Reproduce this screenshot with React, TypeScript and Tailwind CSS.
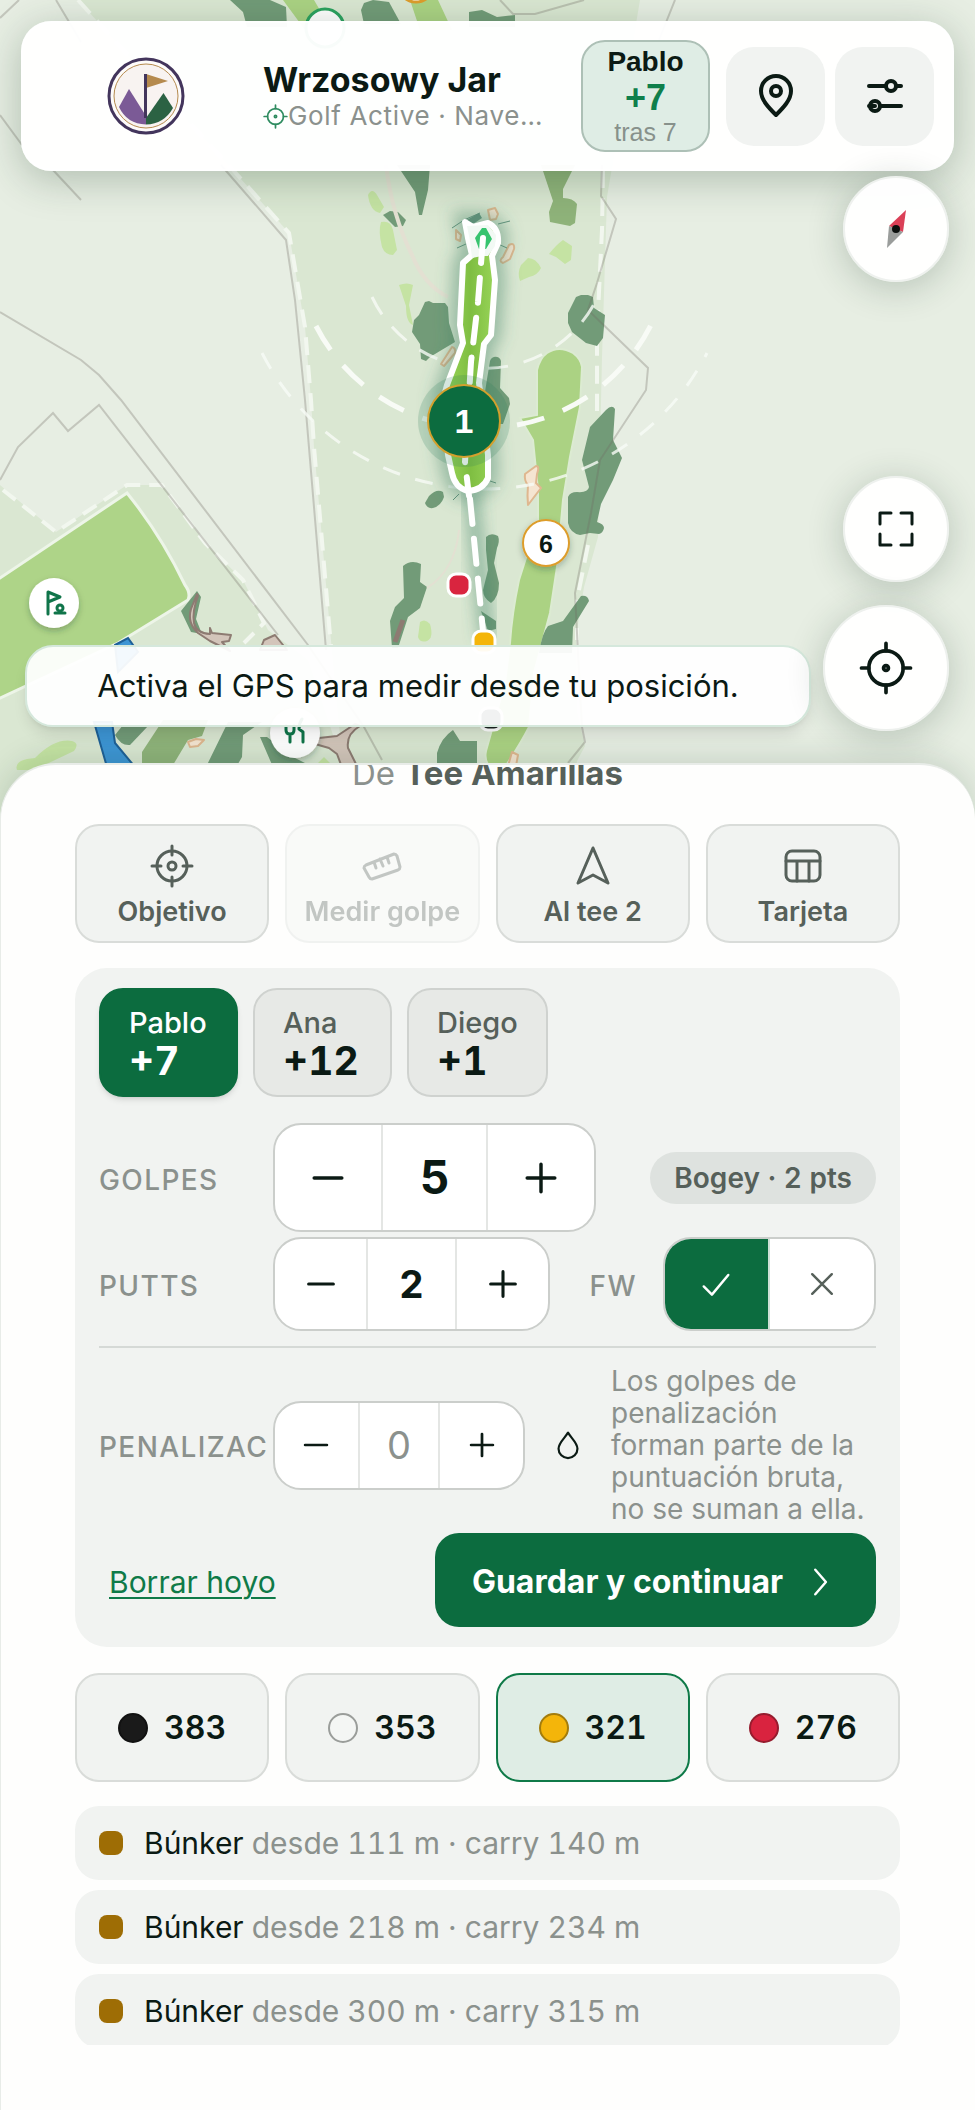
import { useState } from "react";
import type { ReactNode } from "react";

const players = [
  { name: "Pablo", score: "+7" },
  { name: "Ana", score: "+12" },
  { name: "Diego", score: "+1" },
];

const tees = [
  { name: "Negras", distance: 383, dot: "bg-[#1a1a1a] border-[#111111]" },
  { name: "Blancas", distance: 353, dot: "bg-[#f4f6f4] border-[#9a9d9a]" },
  { name: "Amarillas", distance: 321, dot: "bg-[#f4b50a] border-[#a37c0c]" },
  { name: "Rojas", distance: 276, dot: "bg-[#d9233f] border-[#961c2e]" },
];

const hazards = [
  { from: 111, carry: 140 },
  { from: 218, carry: 234 },
  { from: 300, carry: 315 },
];

const woods = [
  "M230 0h40l16 7 1 20h-40l-4-15z",
  "M364 3l9-3 16 2 12 22h-37l-3-14z",
  "M469 12l13-2 15 7 18-2v12h-46z",
  "M397 165h33l-2 25-6 25h-3l-4-23z",
  "M383 215l7-4 8 1 8 8-3 6-8 1z",
  "M425 302l4-1 4 2 12 0 3 4 1 16 6 19-10 6-15 9-4 4-5-2-1-15-8-12 2-12 5-5z",
  "M490 361c2-6 10-5 11 0l-1 27 9 10 1 6-7 20h-23l7-45z",
  "M576 297l5-2h7l5 2 1 11 11 7-2 23-6 8-11-3-14-11-4-9v-10z",
  "M606 410q6-6 9-1l-2 31 9 18-9 22-12 24-4 18q7 2 7 6-1 5-5 6l-9-1-10 2q-10-2-12-12v-26q2-5 9-5 11 1 12-5l-7-27 8-33z",
  "M429 496q8-8 14-4l1 5q-3 9-11 11-6 1-8-5z",
  "M486 537q5-5 12-1 2 5-1 12l-3 15 5 20q0 14-8 20-8-5-8-13l5-20-2-20z",
  "M403 566q8-7 18-2l-1 18 7 5-7 21-12 9-10 31h-6l-2-27 5-14 9-9z",
  "M581 596q7-1 8 5l-16 26-1 26h-33q3-20 9-27l15-5z",
  "M481 611l6 4 9 6v8l-8 2z",
  "M197 591l4 6-5 22 6 15-11-2-10-21z",
  "M115 735l8-10h26l-19 20q-9 1-15-10z",
  "M228 722h34l-19 13-1 22-7 12h-30z",
  "M260 737l7 0 26 20 20 10h-40z",
  "M437 765v-12q4-15 16-23l7 11h17v24z",
];

const lightWoods = [
  "M541 165h34l-12 24v9q10 0 14 6l-2 19-5 3-20-4-1-10 4-11z",
  "M163 720h45l-6 16-14 4-15 25h-31v-13z",
];

const limeSpots = [
  "M368 195q4-8 9 0l7 12-4 6q-10-2-12-18z",
  "M381 222q10-2 12 8l4 20-4 5q-8 0-11-8-4-16-1-25z",
  "M399 285q8-3 14 0l-4 20 4 20q-7-2-7-19z",
  "M528 258q8 0 13 10-3 7-12 9l-9 4q-3-8 1-16z",
  "M563 240l9 6-1 14-6 4-9-7-7-3q7-9 14-14z",
  "M420 622q5-4 10 2 4 14-3 17-7 2-9-4z",
  "M17 770q-3-8 10-11l8-1q20-20 37-17 8 2 2 10l-40 19z",
  "M318 763l6-6 6 6z",
];

const bunkers = [
  "M488 210l7-2 3 6-2 5-6 1z",
  "M456 230l5 5-1 6-4-2z",
  "M509 245q6-3 5 4l-4 10-7 4q-5-2 0-6z",
  "M441 364l11-17q4 1 3 6l-11 13z",
  "M536 466q4 0 1 8l-1 9 5 5-13 17q-1-9 0-20-4-4-3-11z",
  "M188 742l8-3 8 1-6 6-8 1z",
  "M508 766l4-14 6 3-2 11z",
];

const boundaries = [
  "M19 0L0 18M56 0L81 42M53 170L81 200M0 115l22 30",
  "M500 0l13 14h22L584 0M675 0l-16 40",
  "M221 165l65 75 9 60 10 100 21 250",
  "M602 165l-1 31 15 23-19 64-9 27 60 58-2 22-46 70-9 53-16 80 3 60 4 74 3 15-17 21",
  "M0 312l81 48 18 15 22 25 187 245 56 82 18 33",
  "M0 480l18-33 35-34 15 18 31-26 179 230",
];

const ink = "stroke-[#0b1a14]";

function CourseMap() {
  return (
    <svg
      aria-hidden="true"
      className="absolute inset-x-0 top-0 h-[840px] w-full"
      viewBox="0 0 975 840"
      preserveAspectRatio="xMidYMin slice"
      fill="none"
    >
      <defs>
        <filter id="glow" x="-60%" y="-20%" width="220%" height="140%">
          <feGaussianBlur stdDeviation="8" />
        </filter>
        <filter id="pin-shadow" x="-50%" y="-50%" width="200%" height="200%">
          <feDropShadow dx="0" dy="3" stdDeviation="3" floodColor="#1d3b2a" floodOpacity="0.3" />
        </filter>
        <linearGradient id="fairway" x1="0" x2="1" y1="0" y2="0">
          <stop offset="0" stopColor="#9ad658" />
          <stop offset="0.5" stopColor="#7fbe42" />
          <stop offset="1" stopColor="#9bd75a" />
        </linearGradient>
      </defs>

      <rect width="975" height="840" fill="#e7eee3" />
      <path
        d="M78 0L233 170l56 63 16 94 6 73 3 47 16 183 20 210h219l8-79 8-15-8-34-1-75 8-50 14-50 4-180 5-160L640 0z"
        fill="#dae7d2"
      />
      <path d="M0 485l56 47 71-47h35l43 58 38 37 25 50 40 30 60 180H0z" fill="#dae7d2" />

      <path d="M-6 582l133-89q34 42 58 92 6 8 3 15L118 643-6 701z" fill="#aed488" stroke="#edf5e8" strokeWidth="3" />
      <path
        d="M3 490l53 42 71-47h35l43 58 38 37 21 43-20 20"
        stroke="#f2f7ef"
        strokeWidth="4"
        strokeDasharray="16 9"
      />
      <path
        d="M78 0L233 170l56 63 16 94 6 73 3 47 17 200M603 170l-1 60-5 103v78M588 545l-11 55v40"
        stroke="#f2f7ef"
        strokeWidth="4"
        strokeDasharray="18 10"
      />

      <path d="M283 0h31l14 24-20 10zM410 0h28l14 30h-32z" fill="#abd283" />
      <path
        d="M537 370q3-12 10-17 12-8 26 0 8 6 9 14l-2 40-10 50-7 43-6 67-7 46-16 60-5 54q-8 16-24 40h-15q-6-6-4-16l19-68 5-40q2-30 9-63l19-60v-30l-5-50-13-22 17-3z"
        fill="#abd283"
        stroke="#dcebd2"
        strokeWidth="2"
      />
      {lightWoods.map((d) => (
        <path key={d} d={d} fill="#8fb37a" />
      ))}
      {woods.map((d) => (
        <path key={d} d={d} fill="#729b78" />
      ))}
      {limeSpots.map((d) => (
        <path key={d} d={d} fill="#c5e3a3" />
      ))}
      <path d="M386 165q6 50 26 90 12 30 36 42" stroke="#e3e0d2" strokeWidth="4" />
      <path d="M459 530q-4 40-32 58" stroke="#e3e0d2" strokeWidth="2" />

      <g stroke="#8d7b72" strokeWidth="2" strokeLinejoin="round" fill="#d3c5ba">
        <path d="M197 594l-6 15q-4 14 7 24l12 8 20 10-8-9 7-1 2-6-19-2-2-5 0 6q-14-1-16-11-2-12 4-27z" />
        <path d="M260 650l4-10 11-5 12 15z" />
        <path d="M355 724l-18 12-18 2-4 6 14 4 8 6 6 16h16l-11-22q-2-14 12-22z" />
        <path d="M403 620l-8 22" strokeWidth="5" />
      </g>
      {bunkers.map((d) => (
        <path key={d} d={d} fill="#f5e5d1" stroke="#dfb78f" strokeWidth="2" strokeLinejoin="round" />
      ))}
      <path
        d="M115 645l13-7 10 14-20 20zM94 722h18l3 21 20 24h-28z"
        fill="#3d95d4"
        stroke="#1e6097"
        strokeWidth="2"
      />
      {boundaries.map((d) => (
        <path key={d} d={d} stroke="#6f6a62" strokeOpacity="0.3" strokeWidth="2" />
      ))}

      {/* distance arcs around the green */}
      <g stroke="#f8fbf6" strokeLinecap="butt">
        <path d="M372 297A125 125 0 0 0 600 292" strokeWidth="3" strokeDasharray="20 16" opacity="0.8" />
        <path d="M316 326A188 188 0 0 0 651 325" strokeWidth="5" strokeDasharray="28 20" />
        <path d="M262 353A250 250 0 0 0 707 353" strokeWidth="3" strokeDasharray="18 16" opacity="0.8" />
      </g>

      {/* hole being played */}
      <path
        d="M465 222l23 1q11 5 10 20l-6 13 3 24-4 55-7 9-5 39 9 72v23q-5 12-20 13-13-3-16-18l-4-18-5-55 4-15 16-42-3-18 3-62 9-8z"
        stroke="#3d8064"
        strokeOpacity="0.45"
        strokeWidth="20"
        filter="url(#glow)"
      />
      <path d="M471 490l16 150" stroke="#3d8064" strokeOpacity="0.55" strokeWidth="13" filter="url(#glow)" />
      <path d="M452 228l12-8 16-7M498 224l12-3M498 244l9 4M466 244l-9 4M453 500l6-6M487 480l9 3" stroke="#5d8f78" strokeWidth="1" />
      <path d="M465 221l14-8 3 5-12 8z" fill="#5d8f78" />
      <path
        d="M465 222l8 5 15-4q11 5 10 20l-6 13 3 24-4 55-7 9-5 39 9 72v23q-5 12-20 13-13-3-16-18l-4-18-5-55 4-15 16-42-3-18 3-62 9-8-4-17z"
        fill="url(#fairway)"
        stroke="#ffffff"
        strokeWidth="6"
        strokeLinejoin="round"
      />
      <path d="M467 226l21-1 8 10-1 11-7 10h-6l-10 2-2-17z" fill="#f2f9f4" />
      <path d="M475 238l7-10h4l6 11-6 10h-7z" fill="#37c46f" />
      <path
        d="M483 238l-5 64-7 60-6 100 4 34"
        stroke="#ffffff"
        strokeWidth="6"
        strokeLinecap="round"
        strokeDasharray="25 15"
      />
      <path
        d="M470 499l14 142"
        stroke="#ffffff"
        strokeWidth="6"
        strokeLinecap="round"
        strokeDasharray="25 15"
      />

      {/* tee markers */}
      <g stroke="#ffffff" strokeWidth="3">
        <rect x="448" y="574" width="22" height="22" rx="8" fill="#d9253f" />
        <rect x="473" y="631" width="22" height="22" rx="8" fill="#f4b50a" />
        <rect x="480" y="708" width="22" height="22" rx="8" fill="#1b2320" />
      </g>

      {/* hole numbers */}
      <circle cx="325" cy="28" r="19" fill="#ffffff" stroke="#2ba15f" strokeWidth="3" />
      <circle cx="416" cy="-16" r="18" fill="#ffffff" stroke="#dd9d2c" strokeWidth="3" />
      <circle cx="464" cy="421" r="46" fill="#2e7d5b" fillOpacity="0.2" />
      <circle cx="464" cy="421" r="36" fill="#0c6c3f" stroke="#d3a02d" strokeWidth="2" />
      <text x="464" y="433" textAnchor="middle" className="fill-white font-['Liberation_Sans'] text-[34px] font-bold">
        1
      </text>
      <g filter="url(#pin-shadow)">
        <circle cx="546" cy="543" r="23" fill="#ffffff" stroke="#dd9d2c" strokeWidth="2" />
      </g>
      <text x="546" y="553" textAnchor="middle" className="fill-[#0b1a14] font-['Liberation_Sans'] text-[25px] font-bold">
        6
      </text>

      {/* points of interest */}
      <g filter="url(#pin-shadow)">
        <circle cx="54" cy="603" r="25" fill="#ffffff" />
        <circle cx="295" cy="733" r="25" fill="#ffffff" />
      </g>
      <g stroke="#10754a" strokeWidth="3" strokeLinecap="round" strokeLinejoin="round">
        <path d="M48 614v-22l12 5-12 5M55 613h10" />
        <circle cx="60" cy="608" r="3" />
        <path d="M290 742v-8M286 726v4q0 4 4 4t4-4v-4M303 742v-10l-4-3q0-6 3-10" />
      </g>
    </svg>
  );
}

function Icon({ size, children, className = "", width = 4 }: { size: number; children: ReactNode; className?: string; width?: number }) {
  return (
    <svg
      aria-hidden="true"
      width={size}
      height={size}
      viewBox="0 0 44 44"
      fill="none"
      strokeWidth={width}
      strokeLinecap="round"
      strokeLinejoin="round"
      className={`shrink-0 ${className}`}
    >
      {children}
    </svg>
  );
}

function Logo() {
  return (
    <svg aria-label="Wrzosowy Jar" role="img" viewBox="0 0 78 78" className="size-[78px] shrink-0">
      <circle cx="39" cy="39" r="37" fill="#fdfbfa" stroke="#43355c" strokeWidth="3" />
      <circle cx="39" cy="39" r="32" fill="#f8f3f1" stroke="#b58a4e" strokeWidth="1" />
      <path d="M39 67.5Q20 67 12 50L22 32L39 59z" fill="#7b5a96" />
      <path d="M39 67.5Q57 67 66 51L56.500 36L39 61z" fill="#2b6243" />
      <path d="M39 17l22 7-22 7z" fill="#b58a4e" />
      <path d="M38.500 17v44" stroke="#43355c" strokeWidth="3" />
    </svg>
  );
}

function TargetDot() {
  return (
    <>
      <circle cx="22" cy="22" r="14" />
      <path d="M22 8V2M22 42v-6M8 22H2M42 22h-6" />
      <circle cx="22" cy="22" r="2" />
    </>
  );
}

function Header() {
  return (
    <header className="flex h-[150px] items-center rounded-[30px] border-2 border-white/60 bg-white/97 pr-[18px] pl-[84px] shadow-[0_8px_40px_rgba(30,60,40,0.28)]">
      <Logo />
      <div className="ml-[78px] min-w-0 flex-1 pt-1">
        <h1 className="text-[34px] leading-9 font-bold whitespace-nowrap">Wrzosowy Jar</h1>
        <p className="flex items-center text-[26px] leading-9 text-[#8b918d]">
          <Icon size={25} className="stroke-[#2f8c60]" width={3}>
            <TargetDot />
          </Icon>
          <span className="truncate tracking-wide">Golf Active · Navegador</span>
        </p>
      </div>
      <button
        type="button"
        className="ml-7 flex h-28 w-[129px] flex-col items-center justify-center rounded-3xl border-2 border-[#adc0b6] bg-[#dfede5] font-['Liberation_Sans',Arial,sans-serif]"
      >
        <span className="text-[28px] leading-8 font-bold">Pablo</span>
        <span className="text-[36px] leading-10 font-bold text-[#0f7f4b]">+7</span>
        <span className="text-[25px] leading-7 text-[#87918b]">tras 7</span>
      </button>
      <button type="button" aria-label="Campos" className="ml-4 flex size-[99px] items-center justify-center rounded-[28px] bg-[#f1f3f1]">
        <Icon size={44} className={ink}>
          <path d="M22 41C15 34 7 26 7 17a15 15 0 0 1 30 0c0 9-8 17-15 24z" />
          <circle cx="22" cy="17" r="5" />
        </Icon>
      </button>
      <button type="button" aria-label="Ajustes" className="ml-2.5 flex size-[99px] items-center justify-center rounded-[28px] bg-[#f1f3f1]">
        <Icon size={44} className={ink}>
          <path d="M6 12h17M34 12h4M18 32h20M6 32h6" />
          <circle cx="28" cy="12" r="5" />
          <circle cx="12" cy="32" r="5" />
        </Icon>
      </button>
    </header>
  );
}

function MapButton({ label, large, children }: { label: string; large?: boolean; children: ReactNode }) {
  const size = large ? "size-[126px]" : "size-[106px]";
  return (
    <button
      type="button"
      aria-label={label}
      className={`flex shrink-0 items-center justify-center rounded-full border-2 border-[#eef1ee] bg-white/97 shadow-[0_6px_36px_rgba(30,60,40,0.24)] ${size}`}
    >
      {children}
    </button>
  );
}

function ActionButton({ label, disabled, children }: { label: string; disabled?: boolean; children: ReactNode }) {
  return (
    <button
      type="button"
      disabled={disabled}
      className="flex h-[119px] flex-col items-center justify-center gap-2 rounded-3xl border-2 border-[#d9dcd9] bg-[#f1f3f1] pt-1 text-[27px] leading-8 font-semibold whitespace-nowrap text-[#56605a] disabled:opacity-35"
    >
      <Icon size={44} className="stroke-[#56605a]" width={3}>
        {children}
      </Icon>
      {label}
    </button>
  );
}

function Stepper({ label, value, onChange, size }: { label: string; value: number; onChange: (value: number) => void; size: "lg" | "md" | "sm" }) {
  const box = { lg: "h-[109px] w-[323px]", md: "h-[94px] w-[277px]", sm: "h-[89px] w-[252px]" }[size];
  const text = {
    lg: "text-[46px] font-bold",
    md: "text-[38px] font-bold",
    sm: "text-[38px] text-[#8b918d]",
  }[size];
  const icon = { lg: 38, md: 34, sm: 30 }[size];
  return (
    <div role="group" aria-label={label} className={`grid shrink-0 grid-cols-3 overflow-hidden rounded-[28px] border-2 border-[#cbcecb] bg-white ${box}`}>
      <button type="button" aria-label="Menos" className="flex items-center justify-center" onClick={() => onChange(Math.max(0, value - 1))}>
        <Icon size={icon} className={ink}>
          <path d="M6 22h32" />
        </Icon>
      </button>
      <output className={`flex items-center justify-center border-x-2 border-[#e4e6e4] ${text}`}>{value}</output>
      <button type="button" aria-label="Más" className="flex items-center justify-center" onClick={() => onChange(value + 1)}>
        <Icon size={icon} className={ink}>
          <path d="M6 22h32M22 6v32" />
        </Icon>
      </button>
    </div>
  );
}

function RowLabel({ children }: { children: ReactNode }) {
  return (
    <span className="w-[174px] shrink-0 pt-1 text-[28px] leading-9 font-medium tracking-wider whitespace-nowrap text-[#8b918d] uppercase">
      {children}
    </span>
  );
}

function ScoreCard() {
  const [player, setPlayer] = useState("Pablo");
  const [strokes, setStrokes] = useState(5);
  const [putts, setPutts] = useState(2);
  const [penalties, setPenalties] = useState(0);
  const [fairway, setFairway] = useState(true);

  return (
    <section className="mt-[25px] rounded-[32px] bg-[#f1f3f1] px-6 pt-5 pb-5">
      <div className="flex gap-[15px]">
        {players.map((item) => (
          <button
            key={item.name}
            type="button"
            aria-pressed={item.name === player}
            onClick={() => setPlayer(item.name)}
            className={
              item.name === player
                ? "flex h-[109px] min-w-[139px] flex-col items-start justify-center rounded-3xl border-2 border-[#0c6c3f] bg-[#0c6c3f] px-7 text-white shadow-md"
                : "flex h-[109px] min-w-[139px] flex-col items-start justify-center rounded-3xl border-2 border-[#cfd2cf] bg-[#e7e9e6] px-7 text-[#0b1a14]"
            }
          >
            <span className={item.name === player ? "text-[29px] leading-9 font-medium" : "text-[29px] leading-9 font-medium text-[#56605a]"}>
              {item.name}
            </span>
            <span className="text-[39px] leading-10 font-bold tabular-nums">{item.score}</span>
          </button>
        ))}
      </div>

      <div className="mt-[26px] flex items-center">
        <RowLabel>Golpes</RowLabel>
        <Stepper label="Golpes" value={strokes} onChange={setStrokes} size="lg" />
        <span className="ml-auto rounded-full bg-[#dee2df] px-6 py-2.5 text-[28px] leading-8 font-semibold whitespace-nowrap text-[#56605a] tabular-nums">
          Bogey · 2 pts
        </span>
      </div>

      <div className="mt-[5px] flex items-center">
        <RowLabel>Putts</RowLabel>
        <Stepper label="Putts" value={putts} onChange={setPutts} size="md" />
        <span className="ml-auto pt-1 text-[28px] leading-9 font-medium tracking-wider text-[#8b918d]">FW</span>
        <div role="group" aria-label="Fairway" className="ml-[26px] grid h-[94px] w-[213px] grid-cols-2 overflow-hidden rounded-[28px] border-2 border-[#cbcecb] bg-white">
          <button
            type="button"
            aria-label="Calle"
            aria-pressed={fairway}
            onClick={() => setFairway(true)}
            className={fairway ? "flex items-center justify-center border-r-2 border-[#cfe0d6] bg-[#0c6c3f] stroke-white" : "flex items-center justify-center border-r-2 border-[#e4e6e4] stroke-[#56605a]"}
          >
            <Icon size={36} width={3}>
              <path d="M7 25l10 10L37 11" />
            </Icon>
          </button>
          <button
            type="button"
            aria-label="Fuera de calle"
            aria-pressed={!fairway}
            onClick={() => setFairway(false)}
            className={fairway ? "flex items-center justify-center stroke-[#56605a]" : "flex items-center justify-center bg-[#0c6c3f] stroke-white"}
          >
            <Icon size={36} width={3}>
              <path d="M10 10l24 24M34 10L10 34" />
            </Icon>
          </button>
        </div>
      </div>

      <div className="mt-[15px] flex items-center border-t-2 border-[#d5d9d6] pt-[17px]">
        <RowLabel>Penalizac</RowLabel>
        <Stepper label="Penalización" value={penalties} onChange={setPenalties} size="sm" />
        <Icon size={32} className={`ml-[27px] ${ink}`} width={3}>
          <path d="M22 5C18 12 9 19 9 27a13 13 0 0 0 26 0C35 19 26 12 22 5z" />
        </Icon>
        <p className="ml-[27px] flex-1 text-[28px] leading-8 text-[#8b918d]">
          Los golpes de penalización forman parte de la puntuación bruta, no se suman a ella.
        </p>
      </div>

      <div className="mt-2 flex items-center justify-between">
        <button type="button" className="pt-1 pl-2.5 text-[30px] leading-9 text-[#0f7a48] underline decoration-2 underline-offset-4">
          Borrar hoyo
        </button>
        <button type="button" className="flex h-[94px] w-[441px] items-center justify-center gap-5 rounded-3xl bg-[#0c6c3f] pt-1 text-[32px] font-bold whitespace-nowrap text-white">
          Guardar y continuar
          <Icon size={36} className="stroke-white" width={3}>
            <path d="M15 7l13 15-13 15" />
          </Icon>
        </button>
      </div>
    </section>
  );
}

export default function App() {
  const [tee, setTee] = useState("Amarillas");

  return (
    <div className="relative flex min-h-screen flex-col overflow-hidden bg-[#fefefd] font-[Inter,sans-serif] text-[#0b1a14]">
      <CourseMap />

      <div className="relative px-[21px] pt-[21px] pb-8">
        <Header />
        <div className="mt-[5px] flex flex-col items-end pr-[5px]">
          <MapButton label="Brújula">
            <Icon size={44}>
              <path d="M32 3L15 19l7 3 7 3z" fill="#db4057" />
              <path d="M13 41l16-16-7-3-7-3z" fill="#9a9d9b" />
              <circle cx="22" cy="22" r="4" fill="#0b0f0d" />
            </Icon>
          </MapButton>
        </div>
        <div className="mt-[194px] flex justify-end pr-[5px]">
          <MapButton label="Pantalla completa">
            <Icon size={44} className={ink} width={3}>
              <path d="M6 17V6h11M27 6h11v11M38 27v11H27M17 38H6V27" />
            </Icon>
          </MapButton>
        </div>
        <div className="mt-[23px] flex items-end gap-3 pr-[5px] pl-1">
          <p className="mb-1 flex h-[82px] min-w-0 flex-1 items-center justify-center rounded-[28px] border-2 border-[#d5e8dc] bg-white/94 text-[31px] whitespace-nowrap shadow-lg">
            Activa el GPS para medir desde tu posición.
          </p>
          <MapButton label="Mi posición" large>
            <Icon size={54} className={ink} width={3}>
              <TargetDot />
            </Icon>
          </MapButton>
        </div>
      </div>

      <main className="relative flex flex-1 flex-col overflow-hidden rounded-t-[56px] border-t-2 border-l border-[#e8ece8] bg-[#fefefd] pr-[75px] pl-[74px] shadow-[0_-6px_30px_rgba(30,60,40,0.15)]">
        <p className="-mt-3 text-center text-[33px] leading-10 text-[#8b918d]">
          De <strong className="font-bold text-[#56605a]">Tee Amarillas</strong>
        </p>

        <div className="mt-[31px] grid grid-cols-4 gap-4">
          <ActionButton label="Objetivo">
            <circle cx="22" cy="22" r="15" />
            <circle cx="22" cy="22" r="4" />
            <path d="M22 2v9M22 33v9M2 22h9M33 22h9" />
          </ActionButton>
          <ActionButton label="Medir golpe" disabled>
            <path d="M6 21L34 10q2 0 3 2l3 11q0 2-2 3L12 35q-2 0-3-2L4 24q0-2 2-3zM14 18l2 6M20 15l3 7M27 13l2 6" />
          </ActionButton>
          <ActionButton label="Al tee 2">
            <path d="M22 4l15 35-15-8-15 8z" />
          </ActionButton>
          <ActionButton label="Tarjeta">
            <rect x="5" y="7" width="34" height="30" rx="6" />
            <path d="M5 17h34M16 17v20M28 17v20" />
          </ActionButton>
        </div>

        <ScoreCard />

        <div className="mt-[26px] grid grid-cols-4 gap-4">
          {tees.map((item) => (
            <button
              key={item.name}
              type="button"
              aria-label={`Tee ${item.name}, ${item.distance} m`}
              aria-pressed={item.name === tee}
              onClick={() => setTee(item.name)}
              className={
                item.name === tee
                  ? "flex h-[109px] items-center justify-center gap-4 rounded-3xl border-2 border-[#0f7a48] bg-[#dfede5]"
                  : "flex h-[109px] items-center justify-center gap-4 rounded-3xl border-2 border-[#d9dcd9] bg-[#f1f3f1]"
              }
            >
              <span className={`size-[30px] rounded-full border-2 ${item.dot}`} />
              <span className="text-[32px] font-semibold tabular-nums">{item.distance}</span>
            </button>
          ))}
        </div>

        <ul className="mt-6 flex max-h-[239px] flex-col gap-2.5 overflow-hidden">
          {hazards.map((item) => (
            <li key={item.from} className="flex h-[74px] shrink-0 items-center gap-[21px] rounded-3xl bg-[#f1f3f1] px-6 text-[30px]">
              <span className="size-6 rounded-lg bg-[#9e6d05]" />
              <span className="text-[#8b918d] tabular-nums">
                <span className="text-[#0b1a14]">Búnker</span> desde {item.from} m · carry {item.carry} m
              </span>
            </li>
          ))}
        </ul>
        <div className="h-16" />
      </main>
    </div>
  );
}
